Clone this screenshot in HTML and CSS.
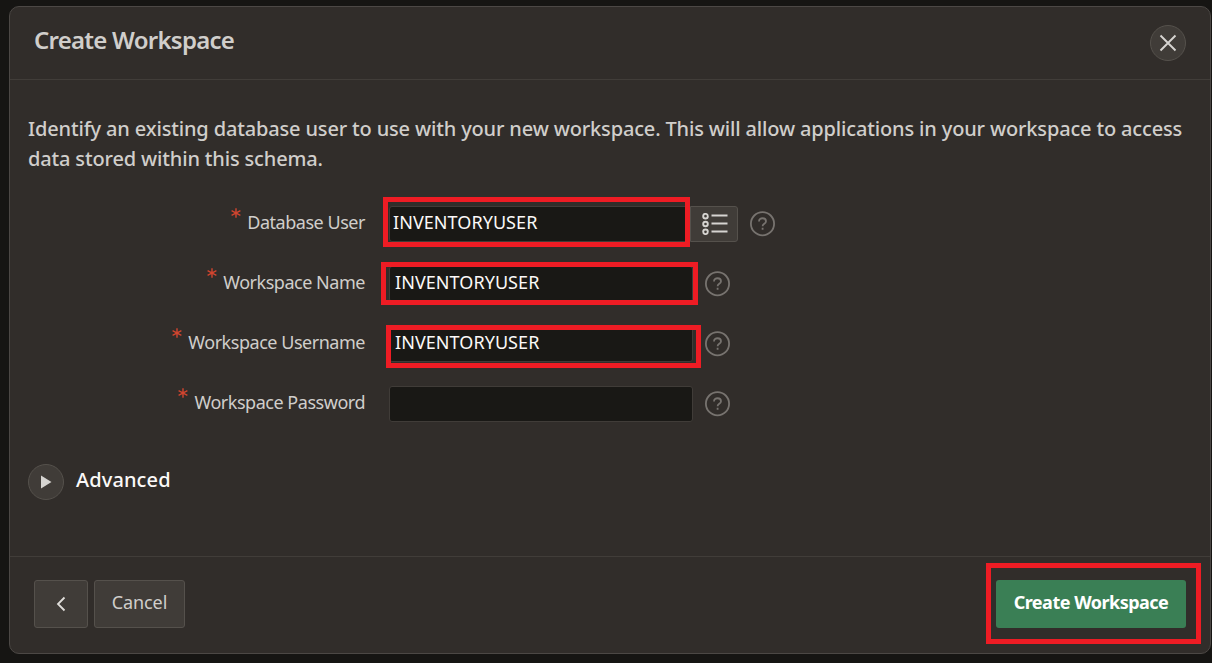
FILE: index.html
```html
<!DOCTYPE html>
<html lang="en">
<head>
<meta charset="utf-8">
<title>Create Workspace</title>
<link rel="stylesheet" href="styles.css">
</head>
<body>
<main class="dialog">
  <header class="dialog-header">
    <h1 class="title">Create Workspace</h1>
    <button class="round close" aria-label="Close"><svg width="18" height="18" viewBox="0 0 18 18"><path d="M1.500 1.500l15 15M16.500 1.500l-15 15" fill="none" stroke="#d6d4d1" stroke-width="1.9"/></svg></button>
  </header>
  <section class="dialog-body">
    <p class="intro">Identify an existing database user to use with your new workspace. This will allow applications in your workspace to access<br>data stored within this schema.</p>
    <div class="form">
      <div class="row">
        <div class="label"><svg class="req" width="10" height="10" viewBox="0 0 10 10"><path d="M5 .3v9.400M.6 2.700l8.800 4.600M9.400 2.700L.6 7.300"/></svg><span>Database User</span></div>
        <div class="field picker"><span class="value">INVENTORYUSER</span><i class="mark mark-user"></i></div>
        <button class="list" aria-label="List"><svg width="26" height="22" viewBox="0 0 26 22" fill="none" stroke="#d6d4d1" stroke-width="1.900"><circle cx="3.500" cy="3.200" r="2.300"/><circle cx="3.500" cy="11" r="2.300"/><circle cx="3.500" cy="18.800" r="2.300"/><path d="M9.500 2.500H25.500M9.500 10.500H25.500M9.500 18.500H25.500"/></svg></button>
        <svg class="help" width="26" height="26" viewBox="0 0 26 26"><circle cx="12.500" cy="12.700" r="11.600"/><path d="M9 10.400c0-4.300 7-4.100 7-.2 0 2.700-3.400 2.500-3.400 5M12.600 16.800v2"/></svg>
      </div>
      <div class="row">
        <div class="label"><svg class="req" width="10" height="10" viewBox="0 0 10 10"><path d="M5 .3v9.400M.6 2.700l8.800 4.600M9.400 2.700L.6 7.300"/></svg><span>Workspace Name</span></div>
        <div class="field"><span class="value">INVENTORYUSER</span><i class="mark mark-name"></i></div>
        <svg class="help" width="26" height="26" viewBox="0 0 26 26"><circle cx="12.500" cy="12.700" r="11.600"/><path d="M9 10.400c0-4.300 7-4.100 7-.2 0 2.700-3.400 2.500-3.400 5M12.600 16.800v2"/></svg>
      </div>
      <div class="row">
        <div class="label"><svg class="req" width="10" height="10" viewBox="0 0 10 10"><path d="M5 .3v9.400M.6 2.700l8.800 4.600M9.400 2.700L.6 7.300"/></svg><span>Workspace Username</span></div>
        <div class="field"><span class="value">INVENTORYUSER</span><i class="mark mark-username"></i></div>
        <svg class="help" width="26" height="26" viewBox="0 0 26 26"><circle cx="12.500" cy="12.700" r="11.600"/><path d="M9 10.400c0-4.300 7-4.100 7-.2 0 2.700-3.400 2.500-3.400 5M12.600 16.800v2"/></svg>
      </div>
      <div class="row">
        <div class="label"><svg class="req" width="10" height="10" viewBox="0 0 10 10"><path d="M5 .3v9.400M.6 2.700l8.800 4.600M9.400 2.700L.6 7.300"/></svg><span>Workspace Password</span></div>
        <div class="field"></div>
        <svg class="help" width="26" height="26" viewBox="0 0 26 26"><circle cx="12.500" cy="12.700" r="11.600"/><path d="M9 10.400c0-4.300 7-4.100 7-.2 0 2.700-3.400 2.500-3.400 5M12.600 16.800v2"/></svg>
      </div>
    </div>
    <div class="advanced">
      <button class="round" aria-label="Expand"><svg width="12" height="14" viewBox="0 0 12 14"><path d="M1 .5l10.500 6.500L1 13.500z" fill="#d6d4d1"/></svg></button>
      <h2 class="subtitle">Advanced</h2>
    </div>
  </section>
  <footer class="dialog-footer">
    <button class="btn back" aria-label="Back"><svg width="10" height="16" viewBox="0 0 10 16"><path d="M8.500 1.500L2 8l6.500 6.500" fill="none" stroke="#e0deda" stroke-width="1.800"/></svg></button>
    <button class="btn cancel">Cancel</button>
    <div class="submit-wrap"><button class="btn submit">Create Workspace</button><i class="mark mark-submit"></i></div>
  </footer>
</main>
</body>
</html>
```
FILE: styles.css
```css
* { box-sizing: border-box; }
body {
  margin: 0;
  height: 663px;
  overflow: hidden;
  padding: 6px 0 0 9px;
  background: #161513;
  color: #d0cecb;
  font: 18px/24px "Noto Sans", "Open Sans", sans-serif;
}
button { font: inherit; color: inherit; padding: 0; margin: 0; }
svg { display: block; flex: none; }
.dialog {
  display: flex;
  flex-direction: column;
  width: 1202px;
  height: 648px;
  border: 1px solid #4c4845;
  border-radius: 10px;
  background: #312d2a;
}
.dialog-header {
  display: flex;
  justify-content: space-between;
  height: 73px;
  padding: 18px 24px 0;
  border-bottom: 1px solid #413d39;
}
.title {
  margin: -1px 0 0;
  font-size: 24px;
  line-height: 32px;
  font-weight: 600;
  letter-spacing: -0.75px;
}
.round {
  display: flex;
  align-items: center;
  justify-content: center;
  width: 36px;
  height: 36px;
  border: 1px solid #55514c;
  border-radius: 50%;
  background: #403c38;
}
.dialog-body { flex: 1; padding: 34px 18px 0; }
.intro {
  margin: 0;
  font-size: 20px;
  line-height: 30px;
  font-weight: 500;
  letter-spacing: -0.155px;
  white-space: nowrap;
}
.form { display: grid; gap: 24px; margin-top: 32px; }
.row { display: flex; align-items: center; height: 36px; }
.label {
  display: flex;
  justify-content: flex-end;
  gap: 6px;
  width: 337px;
  margin-right: 24px;
  padding-bottom: 5px;
  letter-spacing: -0.47px;
  white-space: nowrap;
}
.req { margin-top: -2px; stroke: #d2452f; stroke-width: 1.4; fill: none; }
.field {
  position: relative;
  width: 304px;
  height: 36px;
  padding: 3px 5px;
  border: 1px solid #403c38;
  border-radius: 3px;
  background: #191815;
  color: #fbf9f8;
}
.value { letter-spacing: 0.06px; }
.picker { width: 301px; padding-left: 3px; }
.list {
  display: flex;
  align-items: center;
  justify-content: center;
  width: 48px;
  height: 36px;
  padding-left: 1px;
  border: 1px solid #55514c;
  border-radius: 0 3px 3px 0;
  background: #403c38;
}
.help {
  margin-left: 12px;
  fill: none;
  stroke: #77736f;
  stroke-width: 1.8;
}
.mark { position: absolute; border: 5px solid #ee1c24; }
.mark-user { left: -7px; top: -10px; width: 307px; height: 50px; }
.mark-name { left: -9px; top: -5px; width: 317px; height: 43px; }
.mark-username { left: -4px; top: -2px; width: 315px; height: 43px; }
.mark-submit { left: -10px; top: -17px; width: 215px; height: 81px; }
.advanced { display: flex; gap: 12px; margin-top: 42px; }
.subtitle {
  margin: 0;
  color: #fbf9f8;
  font-size: 20px;
  line-height: 32px;
  font-weight: 500;
  letter-spacing: 0.12px;
}
.dialog-footer {
  display: flex;
  height: 97px;
  padding: 23px 24px 0;
  border-top: 1px solid #413d39;
}
.btn {
  display: flex;
  align-items: center;
  justify-content: center;
  height: 48px;
  border: 1px solid #55514c;
  border-radius: 3px;
  background: #403c38;
}
.back { width: 54px; }
.cancel { width: 91px; margin-left: 6px; padding-bottom: 5px; letter-spacing: -0.1px; }
.submit-wrap { position: relative; margin-left: auto; }
.submit {
  width: 190px;
  padding-bottom: 5px;
  border: 0;
  background: #3a7f55;
  color: #fff;
  font-weight: 700;
  letter-spacing: -0.5px;
}
```
